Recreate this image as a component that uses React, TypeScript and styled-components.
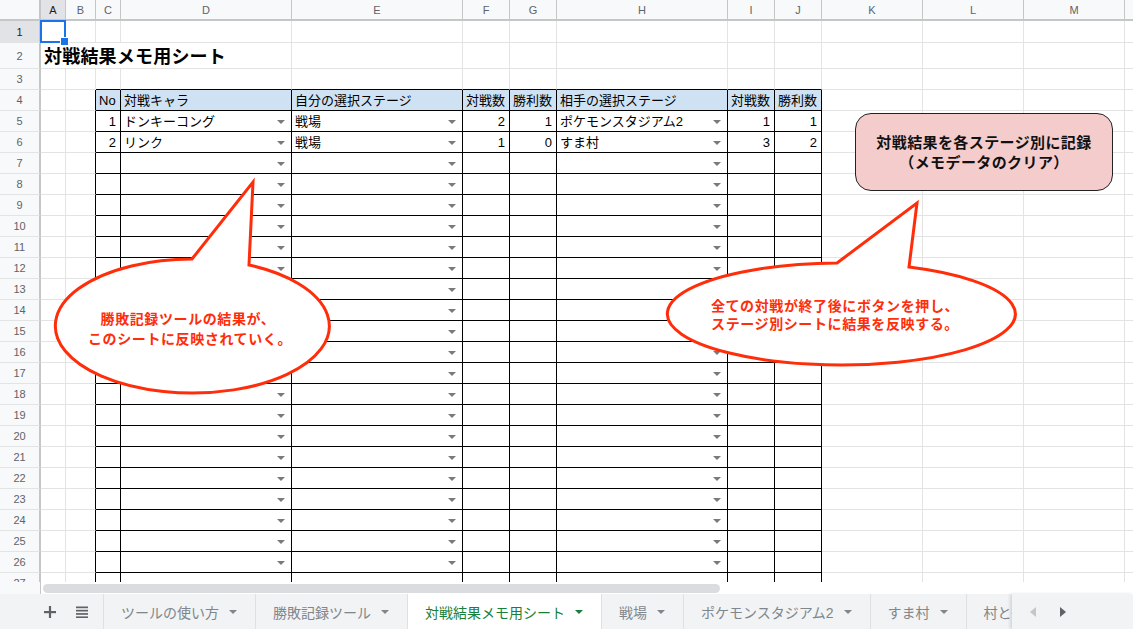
import React from "react";
import styled, { createGlobalStyle } from "styled-components";

const GlobalStyle = createGlobalStyle`
  html, body { margin: 0; padding: 0; background: #fff; overflow: hidden; }
  body { font-family: "Liberation Sans", "Noto Sans CJK JP", Arial, sans-serif; }
  * { box-sizing: border-box; }
`;

const COLS = ["A", "B", "C", "D", "E", "F", "G", "H", "I", "J", "K", "L", "M", "N"];
const WIDTHS = [25, 30, 25, 171, 171, 47, 47, 171, 47, 47, 101, 101, 101, 101];
const ROWS = Array.from({ length: 27 }, (_, i) => i + 1);

const GRID = "#e2e3e3";
const HEAD_LINE = "#c4c7c5";
const RED = "#ff2d0a";

const Page = styled.div`
  width: 1133px;
  height: 629px;
  display: flex;
  flex-direction: column;
  overflow: hidden;
`;

const SheetArea = styled.div`
  position: relative;
  height: 582px;
  overflow: hidden;
`;

const Grid = styled.div`
  display: grid;
  grid-template-columns: 41px ${WIDTHS.map((w) => `${w}px`).join(" ")};
  grid-template-rows: 21px 22px 26px repeat(25, 21px);
  width: max-content;
`;

const Corner = styled.div`
  background: #f8f9fa;
  border-right: 2px solid ${HEAD_LINE};
  border-bottom: 2px solid ${HEAD_LINE};
`;

const ColHeader = styled.div<{ $active?: boolean }>`
  background: ${(p) => (p.$active ? "#e1e3e6" : "#f8f9fa")};
  color: ${(p) => (p.$active ? "#202124" : "#5f6368")};
  border-right: 1px solid ${HEAD_LINE};
  border-bottom: 2px solid ${HEAD_LINE};
  font: 11px "Liberation Sans", Arial, sans-serif;
  display: flex;
  align-items: center;
  justify-content: center;
  padding-top: 1px;
`;

const RowHeader = styled.div<{ $active?: boolean }>`
  background: ${(p) => (p.$active ? "#e1e3e6" : "#f8f9fa")};
  color: ${(p) => (p.$active ? "#202124" : "#5f6368")};
  border-right: 2px solid ${HEAD_LINE};
  border-bottom: 1px solid ${GRID};
  font: 11px "Liberation Sans", Arial, sans-serif;
  display: flex;
  align-items: center;
  justify-content: center;
`;

const Cell = styled.div<{ $rb: string; $bb: string; $head?: boolean; $right?: boolean; $sel?: boolean }>`
  border-right: 1px solid ${(p) => p.$rb};
  border-bottom: 1px solid ${(p) => p.$bb};
  background: ${(p) => (p.$head ? "#cfe2f3" : "transparent")};
  display: flex;
  align-items: center;
  justify-content: ${(p) => (p.$right ? "flex-end" : "flex-start")};
  padding: 1px 4px 0 3px;
  font-size: 13px;
  line-height: 1;
  color: #000;
  white-space: nowrap;
  min-width: 0;
  ${(p) => (p.$sel ? "position: relative;" : "")}
`;

const TitleCell = styled.div`
  grid-column: span 4;
  border-right: 1px solid ${GRID};
  border-bottom: 1px solid ${GRID};
  display: flex;
  align-items: center;
  padding: 2px 3px 0;
  font-size: 18px;
  font-weight: 700;
  letter-spacing: 0.2px;
  line-height: 1;
  white-space: nowrap;
  color: #000;
`;

const Caret = styled.span<{ $color?: string }>`
  margin-left: auto;
  margin-right: 2px;
  width: 0;
  height: 0;
  flex: none;
  border-left: 4px solid transparent;
  border-right: 4px solid transparent;
  border-top: 4px solid ${(p) => p.$color ?? "#7a7a7a"};
`;

const Selection = styled.div`
  position: absolute;
  left: -1px;
  top: -1px;
  right: -1px;
  bottom: -1px;
  border: 2px solid #1a73e8;
  pointer-events: none;
  &::after {
    content: "";
    position: absolute;
    right: -5px;
    bottom: -5px;
    width: 7px;
    height: 7px;
    background: #1a73e8;
    border: 1px solid #fff;
  }
`;

const Overlay = styled.svg`
  position: absolute;
  left: 0;
  top: 0;
  pointer-events: none;
`;

const ActionButton = styled.div`
  position: absolute;
  left: 855px;
  top: 113px;
  width: 258px;
  height: 78px;
  background: #f4cccc;
  border: 1.5px solid #222;
  border-radius: 16px;
  display: flex;
  flex-direction: column;
  align-items: center;
  justify-content: center;
  font-size: 15px;
  font-weight: 700;
  letter-spacing: 0.4px;
  line-height: 20px;
  color: #111;
  padding-top: 2px;
`;

const ScrollRow = styled.div`
  display: flex;
  height: 12px;
`;

const ScrollCorner = styled.div`
  width: 41px;
  background: #f8f9fa;
  border-right: 1px solid ${HEAD_LINE};
`;

const ScrollTrack = styled.div`
  flex: 1;
  padding: 2px 0 0 2px;
`;

const ScrollThumb = styled.div`
  width: 677px;
  height: 9px;
  border-radius: 5px;
  background: #dadce0;
`;

const TabBar = styled.div`
  display: flex;
  height: 35px;
  background: #f1f3f4;
`;

const BarControls = styled.div`
  width: 104px;
  flex: none;
  display: flex;
  align-items: center;
  padding-left: 44px;
  gap: 20px;
  border-right: 1px solid #e0e0e0;
`;

const Tabs = styled.div`
  flex: 1;
  display: flex;
  overflow: hidden;
`;

const Tab = styled.div<{ $active?: boolean }>`
  display: flex;
  align-items: center;
  gap: 10px;
  padding: 0 16px 0 17px;
  flex: none;
  height: 100%;
  border-right: 1px solid #e0e0e0;
  background: ${(p) => (p.$active ? "#fff" : "transparent")};
  color: ${(p) => (p.$active ? "#188038" : "#80868b")};
  font-size: 14px;
  white-space: nowrap;
`;

const TabNav = styled.div`
  width: 121px;
  flex: none;
  display: flex;
  align-items: center;
  gap: 24px;
  padding-left: 18px;
  background: #f1f3f4;
  box-shadow: -2px 0 3px rgba(0, 0, 0, 0.12);
`;

type CellDef = { text: string; right?: boolean };

const DATA: Record<number, Record<number, CellDef>> = {
  4: {
    3: { text: "No" },
    4: { text: "対戦キャラ" },
    5: { text: "自分の選択ステージ" },
    6: { text: "対戦数" },
    7: { text: "勝利数" },
    8: { text: "相手の選択ステージ" },
    9: { text: "対戦数" },
    10: { text: "勝利数" },
  },
  5: {
    3: { text: "1", right: true },
    4: { text: "ドンキーコング" },
    5: { text: "戦場" },
    6: { text: "2", right: true },
    7: { text: "1", right: true },
    8: { text: "ポケモンスタジアム2" },
    9: { text: "1", right: true },
    10: { text: "1", right: true },
  },
  6: {
    3: { text: "2", right: true },
    4: { text: "リンク" },
    5: { text: "戦場" },
    6: { text: "1", right: true },
    7: { text: "0", right: true },
    8: { text: "すま村" },
    9: { text: "3", right: true },
    10: { text: "2", right: true },
  },
};

const inTable = (r: number, c: number) => r >= 4 && r <= 28 && c >= 3 && c <= 10;
const hasDropdown = (r: number, c: number) => r >= 5 && (c === 4 || c === 5 || c === 8);

const PlusIcon = () => (
  <svg width="12" height="12" viewBox="0 0 12 12">
    <rect x="0" y="5" width="12" height="2.2" fill="#5f6368" />
    <rect x="4.9" y="0" width="2.2" height="12" fill="#5f6368" />
  </svg>
);

const MenuIcon = () => (
  <svg width="12" height="12" viewBox="0 0 12 12">
    {[0.5, 3.8, 7.1, 10.4].map((y) => (
      <rect key={y} x="0" y={y} width="12" height="1.7" fill="#5f6368" />
    ))}
  </svg>
);

const NavArrow = ({ dir, color }: { dir: "left" | "right"; color: string }) => (
  <svg width="6" height="10" viewBox="0 0 6 10">
    {dir === "left" ? <path d="M6 0 L0 5 L6 10 Z" fill={color} /> : <path d="M0 0 L6 5 L0 10 Z" fill={color} />}
  </svg>
);

const TABS = ["ツールの使い方", "勝敗記録ツール", "対戦結果メモ用シート", "戦場", "ポケモンスタジアム2", "すま村", "村と街"];

function renderRow(r: number) {
  const cells: React.ReactNode[] = [];
  cells.push(
    <RowHeader key={`h${r}`} $active={r === 1}>
      {r}
    </RowHeader>
  );
  for (let c = 1; c <= COLS.length; c++) {
    if (r === 2 && c === 1) {
      cells.push(<TitleCell key={`t`}>対戦結果メモ用シート</TitleCell>);
      c = 4;
      continue;
    }
    const rb = inTable(r, c) || inTable(r, c + 1) ? "#000" : GRID;
    const bb = inTable(r, c) || inTable(r + 1, c) ? "#000" : GRID;
    const def = DATA[r]?.[c];
    cells.push(
      <Cell key={`${r}-${c}`} $rb={rb} $bb={bb} $head={r === 4 && inTable(r, c)} $right={def?.right} $sel={r === 1 && c === 1}>
        {def?.text}
        {hasDropdown(r, c) && <Caret />}
        {r === 1 && c === 1 && <Selection />}
      </Cell>
    );
  }
  return cells;
}

export default function App() {
  return (
    <Page>
      <GlobalStyle />
      <SheetArea>
        <Grid>
          <Corner />
          {COLS.map((c) => (
            <ColHeader key={c} $active={c === "A"}>
              {c === "N" ? "" : c}
            </ColHeader>
          ))}
          {ROWS.map((r) => renderRow(r))}
        </Grid>

        <Overlay width="1133" height="582" viewBox="0 0 1133 582">
          <path
            d="M 192 259 L 253 182 L 249 265 A 137 67 0 1 1 192 259 Z"
            fill="#fff"
            stroke={RED}
            strokeWidth="3"
            strokeLinejoin="miter"
          />
          <g
            fill={RED}
            fontFamily='"Noto Sans CJK JP", "Liberation Sans", sans-serif'
            fontWeight="700"
            fontSize="14"
            letterSpacing="0.6"
            textAnchor="middle"
            dominantBaseline="central"
          >
            <text x="188" y="318">勝敗記録ツールの結果が、</text>
            <text x="190" y="338">このシートに反映されていく。</text>
          </g>
          <path
            d="M 837 263 L 917 203 L 909 267 A 174 51 0 1 1 837 263 Z"
            fill="#fff"
            stroke={RED}
            strokeWidth="3"
            strokeLinejoin="miter"
          />
          <g
            fill={RED}
            fontFamily='"Noto Sans CJK JP", "Liberation Sans", sans-serif'
            fontWeight="700"
            fontSize="14"
            letterSpacing="0.6"
            textAnchor="middle"
            dominantBaseline="central"
          >
            <text x="835" y="305">全ての対戦が終了後にボタンを押し、</text>
            <text x="835" y="323">ステージ別シートに結果を反映する。</text>
          </g>
        </Overlay>

        <ActionButton>
          <span>対戦結果を各ステージ別に記録</span>
          <span>（メモデータのクリア）</span>
        </ActionButton>
      </SheetArea>

      <ScrollRow>
        <ScrollCorner />
        <ScrollTrack>
          <ScrollThumb />
        </ScrollTrack>
      </ScrollRow>

      <TabBar>
        <BarControls>
          <PlusIcon />
          <MenuIcon />
        </BarControls>
        <Tabs>
          {TABS.map((t) => {
            const active = t === "対戦結果メモ用シート";
            return (
              <Tab key={t} $active={active}>
                {t}
                {t !== "村と街" && <Caret $color={active ? "#188038" : "#80868b"} />}
              </Tab>
            );
          })}
        </Tabs>
        <TabNav>
          <NavArrow dir="left" color="#c4c7c5" />
          <NavArrow dir="right" color="#5f6368" />
        </TabNav>
      </TabBar>
    </Page>
  );
}
